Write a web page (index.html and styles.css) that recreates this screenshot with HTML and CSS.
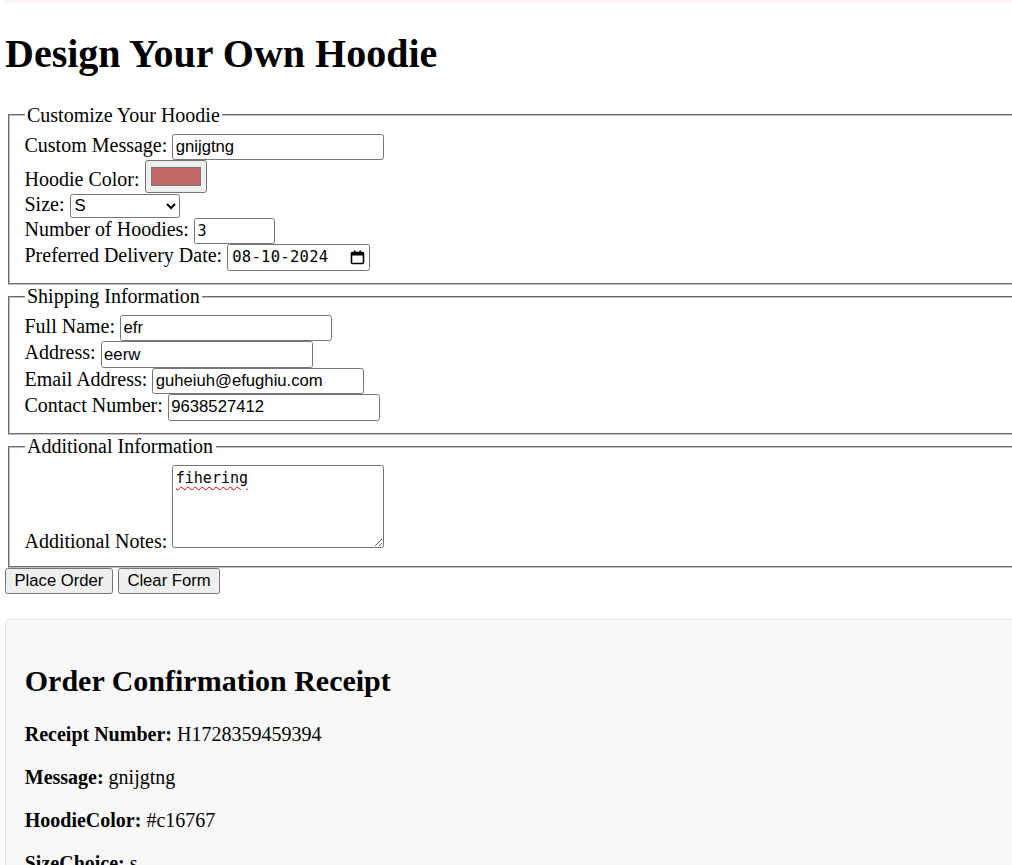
FILE: index.html
```html
<!DOCTYPE html>
<html lang="en">
<head>
<meta charset="utf-8">
<title>Design Your Own Hoodie</title>
<link rel="stylesheet" href="styles.css">
</head>
<body>
<div class="topbar"></div>
<h1 class="title">Design Your Own Hoodie</h1>
<form class="order-form">
  <fieldset class="group">
    <legend class="group-title">Customize Your Hoodie</legend>
    <div class="row"><label class="label">Custom Message:</label> <input class="field" type="text" value="gnijgtng"></div>
    <div class="row"><label class="label">Hoodie Color:</label> <input class="swatch" type="color" value="#c16767"></div>
    <div class="row"><label class="label">Size:</label> <select class="picker"><option>S</option><option>M</option><option>L</option><option>XL</option></select></div>
    <div class="row"><label class="label">Number of Hoodies:</label> <input class="field field-num" type="text" value="3"></div>
    <div class="row"><label class="label">Preferred Delivery Date:</label> <span class="datebox"><span class="date-text">08-10-2024</span><svg class="cal-icon" width="15" height="15" viewBox="0 0 15 15"><rect x="1.5" y="2.5" width="12" height="11" rx="1" fill="none" stroke="#000" stroke-width="1.6"/><rect x="1.5" y="2.5" width="12" height="3" fill="#000"/><rect x="4" y="0.5" width="1.6" height="3" fill="#000"/><rect x="9.4" y="0.5" width="1.6" height="3" fill="#000"/></svg></span></div>
  </fieldset>
  <fieldset class="group">
    <legend class="group-title">Shipping Information</legend>
    <div class="row"><label class="label">Full Name:</label> <input class="field" type="text" value="efr"></div>
    <div class="row"><label class="label">Address:</label> <input class="field" type="text" value="eerw"></div>
    <div class="row"><label class="label">Email Address:</label> <input class="field" type="text" value="guheiuh@efughiu.com"></div>
    <div class="row"><label class="label">Contact Number:</label> <input class="field" type="text" value="9638527412"></div>
  </fieldset>
  <fieldset class="group">
    <legend class="group-title">Additional Information</legend>
    <div class="row"><label class="label">Additional Notes:</label> <textarea class="notes" spellcheck="false">fihering</textarea></div>
  </fieldset>
  <div class="actions"><button class="btn" type="button">Place Order</button> <button class="btn" type="button">Clear Form</button></div>
</form>
<div class="receipt">
  <h2 class="receipt-title">Order Confirmation Receipt</h2>
  <p class="receipt-line"><strong>Receipt Number:</strong> H1728359459394</p>
  <p class="receipt-line"><strong>Message:</strong> gnijgtng</p>
  <p class="receipt-line"><strong>HoodieColor:</strong> #c16767</p>
  <p class="receipt-line"><strong>SizeChoice:</strong> s</p>
  <p class="receipt-line"><strong>Quantity:</strong> 3</p>
  <p class="receipt-line"><strong>Delivery Date:</strong> 2024-10-08</p>
</div>
</body>
</html>
```
FILE: styles.css
```css
html {
  overflow: hidden;
}
body {
  margin: 0 0 0 5px;
  width: 1040px;
  font-family: "Liberation Serif", "Times New Roman", serif;
  font-size: 20px;
  color: #000;
  background: #fff;
}
.topbar {
  height: 3px;
  background: #fdf4fd;
  margin-left: -5px;
  width: 1100px;
}
.title {
  font-size: 40px;
  font-weight: bold;
  margin: 26.8px 0;
}
.order-form {
  margin: 0;
}
.group {
  margin: 0 2.5px;
  padding: 7px 15px 12.5px;
  border: 2px groove rgb(192, 192, 192);
}
.group-title {
  padding: 0 2.5px;
}
.row {
  display: block;
}
.field {
  box-sizing: border-box;
  width: 212px;
  height: 26.4px;
  padding: 1px 2.5px;
  margin: 0;
  font-family: "Liberation Sans", Arial, sans-serif;
  font-size: 16.67px;
  color: #000;
  border: 1px solid #767676;
  border-radius: 2.5px;
  background: #fff;
  vertical-align: baseline;
}
.field-num {
  width: 81px;
  font-family: "DejaVu Sans Mono", monospace;
  font-size: 15px;
}
.swatch {
  box-sizing: border-box;
  width: 62px;
  height: 33.5px;
  padding: 1.25px 2.5px;
  margin: 0;
  border: 1px solid #767676;
  border-radius: 3px;
  background: #efefef;
  vertical-align: baseline;
}
.swatch::-webkit-color-swatch-wrapper {
  padding: 5px 2.5px;
}
.swatch::-webkit-color-swatch {
  border: 1px solid #777;
}
.picker {
  box-sizing: border-box;
  width: 110px;
  height: 23.5px;
  margin: 0;
  font-family: "Liberation Sans", Arial, sans-serif;
  font-size: 16.67px;
  color: #000;
  border: 1px solid #767676;
  border-radius: 2.5px;
  background: #fff;
}
.datebox {
  box-sizing: border-box;
  display: inline-flex;
  align-items: center;
  justify-content: space-between;
  width: 143px;
  height: 26.4px;
  padding: 0 4px 0 4px;
  border: 1px solid #767676;
  border-radius: 2.5px;
  background: #fff;
  vertical-align: baseline;
}
.date-text {
  font-family: "DejaVu Sans Mono", monospace;
  font-size: 15.5px;
  letter-spacing: 0.3px;
}
.cal-icon {
  display: block;
}
.notes {
  box-sizing: border-box;
  width: 212px;
  height: 83px;
  margin: 0;
  padding: 2.5px;
  font-family: "DejaVu Sans Mono", monospace;
  font-size: 15px;
  color: #000;
  border: 1px solid #767676;
  border-radius: 2.5px;
  vertical-align: baseline;
  text-decoration: underline wavy #e00000;
  text-decoration-thickness: 1.2px;
  text-underline-offset: 3px;
}
.actions {
  display: block;
}
.btn {
  box-sizing: border-box;
  height: 26.5px;
  margin: 0;
  padding: 1px 8.5px;
  font-family: "Liberation Sans", Arial, sans-serif;
  font-size: 16.67px;
  color: #000;
  background: #efefef;
  border: 1px solid #767676;
  border-radius: 2.5px;
}
.receipt {
  margin-top: 25px;
  padding: 18.75px;
  background: #f8f8f8;
  border: 1px solid #ddd;
  border-radius: 5px;
}
.receipt-title {
  font-size: 30px;
  font-weight: bold;
  margin: 25px 0;
}
.receipt-line {
  margin: 20px 0;
}
```
